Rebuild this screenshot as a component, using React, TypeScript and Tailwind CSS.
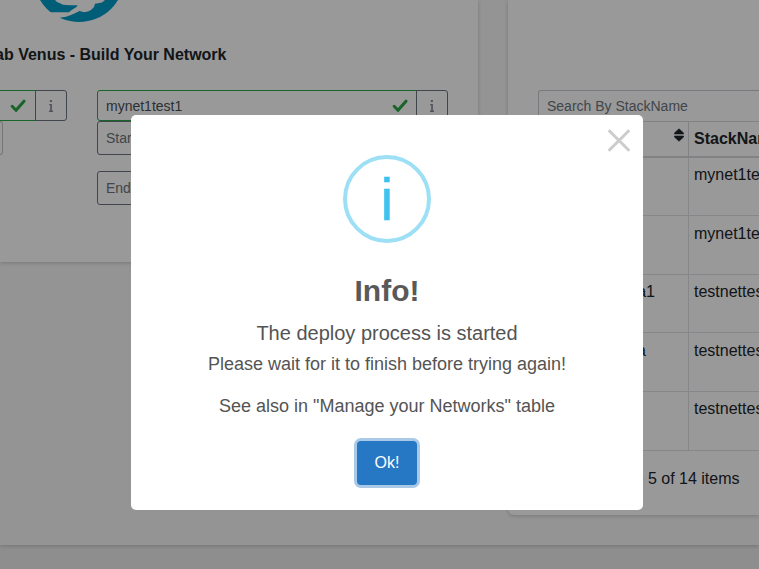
import React from "react";

const rows = [
  { id: "", name: "mynet1test1", h: "h-[58px]", pad: "pt-[5px]" },
  { id: "", name: "mynet1test2", h: "h-[59px]", pad: "pt-1.5" },
  { id: "testa1", name: "testnettest1", h: "h-[58px]", pad: "pt-[5px]" },
  { id: "testa", name: "testnettest2", h: "h-[59px]", pad: "pt-1.5" },
  { id: "", name: "testnettest3", h: "h-[59px]", pad: "pt-[5px]" },
];

function Check() {
  return (
    <svg className="h-4 w-4 shrink-0" viewBox="0 0 16 16" fill="none">
      <path d="M2.2 8.3 6 12.3 14 3.2" stroke="#28a745" strokeWidth="3" strokeLinecap="round" strokeLinejoin="round" />
    </svg>
  );
}

function InfoButton() {
  return (
    <button className="-ml-px flex h-[31px] w-8 shrink-0 items-center justify-center rounded-r-[3px] border border-[#6c757d]">
      <svg className="h-4 w-4" viewBox="0 0 16 16" fill="#858b95">
        <path d="M6.9 2h2v2h-2ZM6.2 6h2.7v6.5H10V14H6v-1.5h1.2V7.2h-1Z" />
      </svg>
    </button>
  );
}

function Logo() {
  return (
    <svg className="ml-[38px] block h-[22px] w-[84px]" viewBox="0 0 84 22">
      <circle cx="41" cy="-23.6" r="45.6" fill="#009bc7" />
      <path
        d="M10 12.3H31L33 10.5 36 8.5 38.5 7 39.5 5.3 32 5.2 25 4.8 22 3.2 19 2 17 0V-2H67V0L64 2.5 60 3.3 57 3.8 56 7 53 10 50 11.5 46 12.3 41.5 11 37 13.2 33 15 28 16.8 22 17.8 20 20 8 18Z"
        fill="#fff"
      />
    </svg>
  );
}

function Network() {
  return (
    <section className="h-[262px] w-[478px] shrink-0 overflow-hidden bg-white shadow-[0_1px_4px_rgba(0,0,0,0.2)]">
      <Logo />
      <h1 className="mt-[21px] flex h-6 w-[226.5px] justify-end whitespace-nowrap text-base font-bold">
        OneLab Venus - Build Your Network
      </h1>
      <div className="mt-[23px] flex items-start">
        <div className="w-[67px]">
          <div className="flex">
            <div className="flex h-[31px] w-9 items-center justify-end border-y border-r border-[#28a745] pr-[9px]">
              <Check />
            </div>
            <InfoButton />
          </div>
          <div className="h-[34px] w-[3px] rounded-r-[3px] border-y border-r border-[#c2c6ca]" />
        </div>
        <div className="ml-[30px] w-[351px] text-sm text-[#6c757d]">
          <div className="flex">
            <div className="flex h-[31px] w-80 items-center justify-between rounded-l-[3px] border border-[#28a745] px-2 text-[#495057]">
              <span className="pt-px">mynet1test1</span>
              <Check />
            </div>
            <InfoButton />
          </div>
          <div className="flex h-[34px] items-center rounded-[3px] border border-[#6c757d] pl-2">Start IP</div>
          <div className="mt-4 flex h-[34px] items-center rounded-[3px] border border-[#6c757d] pl-2">End IP</div>
        </div>
      </div>
    </section>
  );
}

function Stacks() {
  return (
    <section className="h-[515px] min-w-0 flex-1 overflow-hidden rounded-bl-md bg-white pl-[30px] pt-[90px] shadow-[0_1px_4px_rgba(0,0,0,0.2)]">
      <div className="flex h-[31px] w-[240px] items-center rounded-tl-[3px] border border-b-0 border-[#c5cad2] pl-2 text-sm text-[#6c757d]">
        Search By StackName
      </div>
      <div className="w-[260px] border-l border-t border-[#d5d9dd]">
        <div className="flex h-9 border-b-2 border-[#d5d9dd] font-bold">
          <div className="flex w-[150px] justify-end border-r border-[#d5d9dd] pr-1 pt-1.5">
            <svg className="h-[14px] w-[10px]" viewBox="0 0 10 14" fill="#212529">
              <path d="M5 0.8 9.6 5V6H.4V5ZM.4 8H9.6V9L5 13.2.4 9Z" stroke="#212529" strokeWidth="0.6" strokeLinejoin="round" />
            </svg>
          </div>
          <div className="whitespace-nowrap pl-[5px] pt-[5px]">StackName</div>
        </div>
        {rows.map((row) => (
          <div key={row.name} className={`flex border-b border-[#dee2e6] ${row.h}`}>
            <div className={`flex w-[150px] justify-end border-r border-[#dee2e6] ${row.pad}`}>
              <span className={row.id === "testa1" ? "pr-[33px]" : "pr-[42px]"}>{row.id}</span>
            </div>
            <div className={`whitespace-nowrap pl-[5px] ${row.pad}`}>{row.name}</div>
          </div>
        ))}
      </div>
      <p className="mt-4 w-[201.5px] whitespace-nowrap text-right">1 to 5 of 14 items</p>
    </section>
  );
}

function Dialog() {
  return (
    <div className="absolute inset-0 bg-black/40 pl-[131px] pt-[115px]">
      <div role="dialog" className="flex h-[395px] w-[512px] flex-col items-center rounded-[5px] bg-white text-[#545454]">
        <div className="flex h-10 w-full justify-end pr-3 pt-[14px]">
          <svg className="h-6 w-6" viewBox="0 0 24 24" stroke="#ccc" strokeWidth="3">
            <path d="M1.7 1.2 22.3 21.8M22.3 1.2 1.7 21.8" />
          </svg>
        </div>
        <div className="flex h-[88px] w-[88px] shrink-0 items-center justify-center rounded-full border-4 border-[#9de0f6] pt-0.5 text-[60px] leading-[80px] text-[#3fc3ee] [-webkit-text-stroke:0.3px_#3fc3ee]">
          i
        </div>
        <h2 className="mt-[30px] h-9 text-[30px] font-bold leading-9 text-[#595959]">Info!</h2>
        <p className="mt-3 h-6 text-[20px] leading-6">The deploy process is started</p>
        <p className="mt-1.5 h-[27px] text-[18px] leading-[27px]">Please wait for it to finish before trying again!</p>
        <p className="mt-[15px] h-[27px] text-[18px] leading-[27px]">See also in "Manage your Networks" table</p>
        <button className="mt-[21px] h-11 w-[60px] rounded-[4px] bg-[#2778c4] text-base text-white shadow-[0_0_0_3px_#a9c9e7]">
          Ok!
        </button>
      </div>
    </div>
  );
}

export default function App() {
  return (
    <main className="relative h-[569px] w-[759px] overflow-hidden bg-[#ededed] font-['Liberation_Sans',Arial,sans-serif] text-base text-[#212529]">
      <div className="flex h-[545px] items-start gap-[30px] bg-[#f7f7f7] shadow-[0_1px_4px_rgba(0,0,0,0.2)]">
        <Network />
        <Stacks />
      </div>
      <Dialog />
    </main>
  );
}
